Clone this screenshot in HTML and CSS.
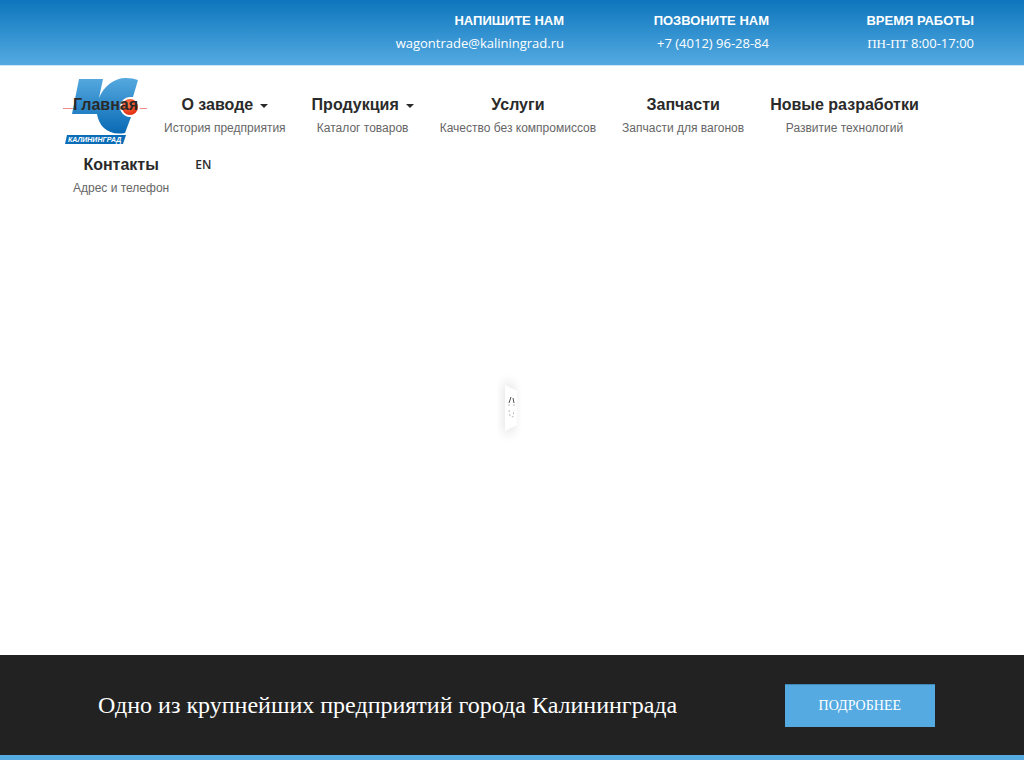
FILE: index.html
```html
<!DOCTYPE html>
<html lang="ru">
<head>
<meta charset="utf-8">
<meta name="viewport" content="width=device-width, initial-scale=1">
<title>Калининград</title>
<link rel="stylesheet" href="styles.css">
</head>
<body>
<header class="topbar">
  <div class="contact"><strong class="contact-title">НАПИШИТЕ НАМ</strong><a class="contact-text" href="mailto:wagontrade@kaliningrad.ru">wagontrade@kaliningrad.ru</a></div>
  <div class="contact"><strong class="contact-title">ПОЗВОНИТЕ НАМ</strong><a class="contact-text" href="tel:+74012962884">+7 (4012) 96-28-84</a></div>
  <div class="contact"><strong class="contact-title">ВРЕМЯ РАБОТЫ</strong><span class="contact-text"><span class="days">ПН-ПТ</span> 8:00-17:00</span></div>
</header>
<main class="hero">
  <a class="logo" href="#" aria-label="Калининград">
    <svg width="86" height="70" viewBox="0 0 86 70">
      <defs>
        <linearGradient id="blue" x1="0" y1="0" x2="0" y2="1"><stop offset="0" stop-color="#55a9df"/><stop offset="1" stop-color="#0869b4"/></linearGradient>
        <radialGradient id="red" cx="0.4" cy="0.3" r="0.7"><stop offset="0" stop-color="#ff7a4a"/><stop offset="1" stop-color="#e22d10"/></radialGradient>
      </defs>
      <path d="M0 32.500H84" stroke="#f08c8c"/>
      <path d="M16 3H40L36 22C41 10 51 2 63 2Q70 2 75 4L70 21C57 21 54 41 68 41L62 57C46 60 36 51 34 38H9Z" fill="url(#blue)"/>
      <circle cx="67" cy="31" r="10" fill="#fff"/>
      <circle cx="67" cy="31" r="8" fill="url(#red)"/>
      <path d="M4 59H63L60 68H2Z" fill="#0b6db8"/>
      <text class="logo-text" x="5" y="66" fill="#fff">КАЛИНИНГРАД</text>
    </svg>
  </a>
  <nav class="menu">
    <a class="item" href="#"><span class="name">Главная</span></a>
    <a class="item" href="#"><span class="name drop">О заводе</span><span class="note">История предприятия</span></a>
    <a class="item" href="#"><span class="name drop">Продукция</span><span class="note">Каталог товаров</span></a>
    <a class="item" href="#"><span class="name">Услуги</span><span class="note">Качество без компромиссов</span></a>
    <a class="item" href="#"><span class="name">Запчасти</span><span class="note">Запчасти для вагонов</span></a>
    <a class="item" href="#"><span class="name">Новые разработки</span><span class="note">Развитие технологий</span></a>
    <a class="item" href="#"><span class="name">Контакты</span><span class="note">Адрес и телефон</span></a>
    <a class="item" href="#"><span class="name lang">EN</span></a>
  </nav>
  <div class="loader">
    <svg width="36" height="90" viewBox="0 0 36 90" aria-hidden="true">
      <defs><filter id="soft" x="-1" y="-1" width="3" height="3"><feGaussianBlur stdDeviation="6"/></filter></defs>
      <path d="M11 20L19 27V69L11 76Z" fill="#000" opacity="0.16" filter="url(#soft)"/>
      <path d="M11 25L23 31V65L11 71Z" fill="#fff"/>
      <path d="M17 37L15 43M19 38L20 43" stroke="#555" fill="none"/>
      <path d="M15 44V47M20 44V47M15 50L16 56L19 57L20 50" stroke="#bbb" stroke-dasharray="2 2" fill="none"/>
    </svg>
  </div>
</main>
<section class="banner">
  <h1 class="banner-title">Одно из крупнейших предприятий города Калининграда</h1>
  <a class="more" href="#">ПОДРОБНЕЕ</a>
</section>
</body>
</html>
```
FILE: styles.css
```css
* { box-sizing: border-box; }
body { margin: 0; background: #fff; font-family: "Liberation Sans", sans-serif; }
a { color: inherit; text-decoration: none; }
.topbar {
  display: flex;
  justify-content: flex-end;
  padding: 10px 50px;
  color: #fff;
  background: linear-gradient(#0d76bd, #54aae1);
  border-bottom: 1px solid #cfe6f5;
}
.contact { display: flex; flex-direction: column; width: 205px; text-align: right; }
.contact-title { font-size: 13px; line-height: 22px; }
.contact-text { font: 13px/22px "Open Sans", sans-serif; }
.days { font-family: "Liberation Serif", serif; }
.hero { position: relative; display: flex; flex-direction: column; min-height: 590px; padding: 27px 60px 0; }
.logo { position: absolute; left: 63px; top: 10px; }
.logo svg { display: block; }
.logo-text { font: italic bold 7px "Liberation Sans", sans-serif; }
.menu { position: relative; display: flex; flex-wrap: wrap; row-gap: 14px; }
.item { display: flex; flex-direction: column; align-items: center; padding: 0 13px; }
.name { font-size: 16px; font-weight: bold; line-height: 24px; color: #2a2a2a; }
.drop::after {
  content: "";
  display: inline-block;
  margin-left: 7px;
  vertical-align: 2px;
  border: 4px solid transparent;
  border-top-color: #2a2a2a;
  border-bottom: 0;
}
.note { font-size: 12px; line-height: 22px; color: #666; }
.lang { font: 600 12px/24px "Open Sans", sans-serif; }
.loader { flex: 1; display: flex; justify-content: center; align-items: flex-start; padding-top: 161px; }
.loader svg { display: block; }
.banner {
  display: flex;
  align-items: center;
  justify-content: space-between;
  min-height: 105px;
  margin-top: -1px;
  padding: 0 89px 0 98px;
  background: #222;
  border-bottom: 5px solid #54aae1;
}
.banner-title { margin: 0; font: 24px/32px "Liberation Serif", serif; color: #fff; }
.more {
  padding: 11px 34px;
  font: 14px/20px "Liberation Serif", serif;
  color: #fff;
  background: #54aae1;
  border-top: 1px solid #3f88b8;
}
```
